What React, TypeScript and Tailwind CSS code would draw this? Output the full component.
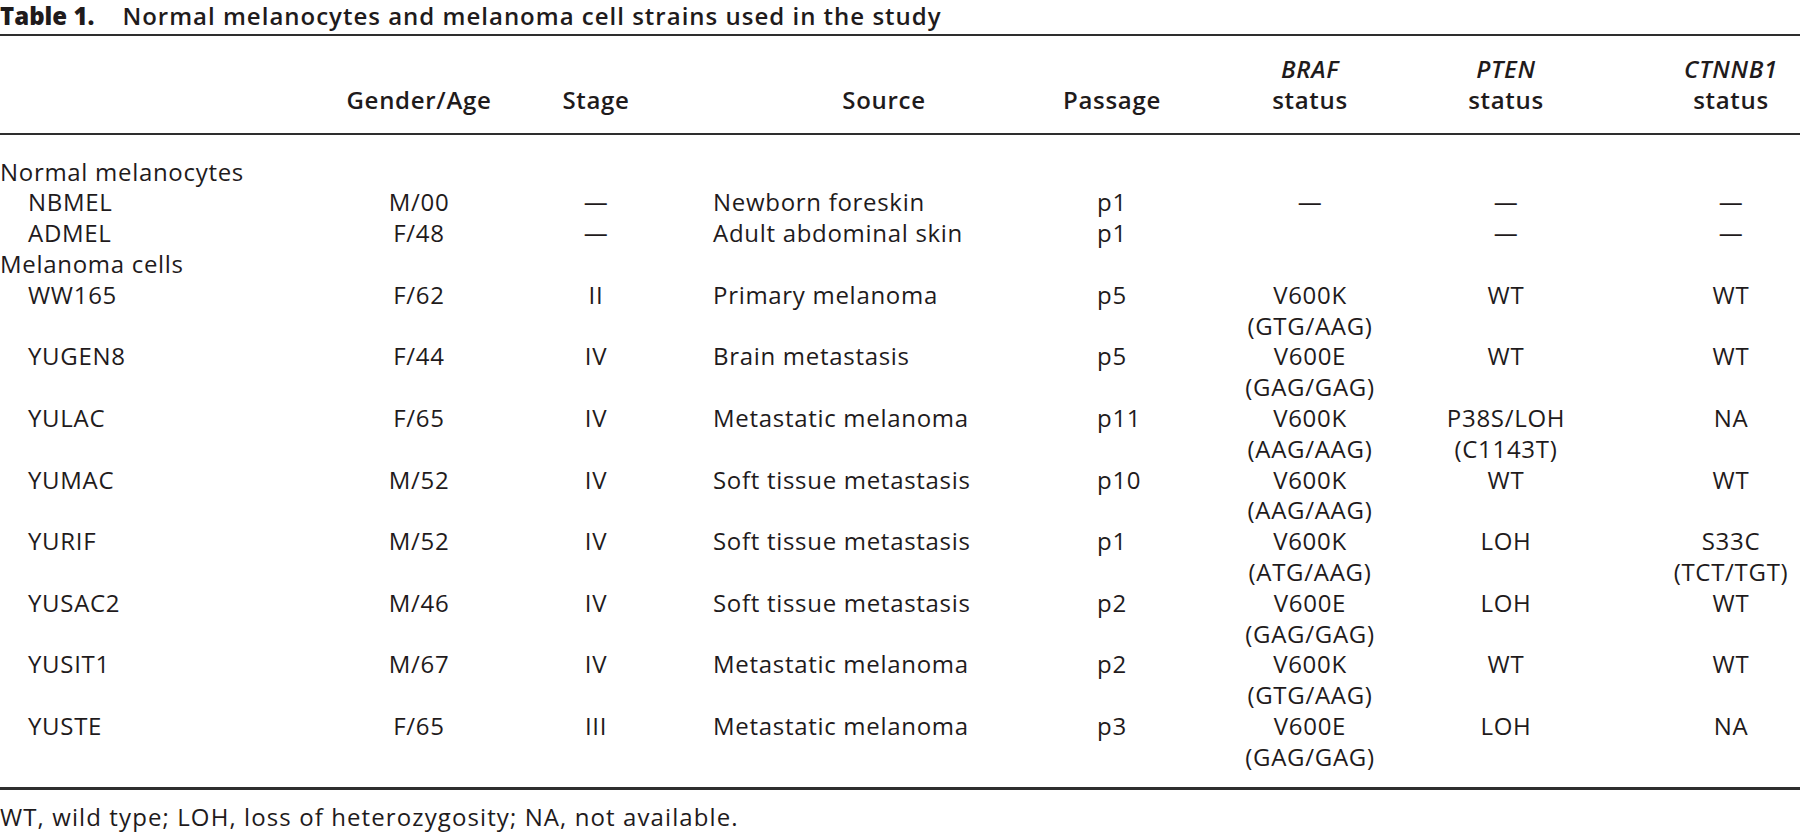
import React from "react";

type Row = {
  name: string;
  ga: string;
  stage: string;
  source: string;
  passage: string;
  braf: string[];
  pten: string[];
  ctnnb1: string[];
};

const normal: Row[] = [
  { name: "NBMEL", ga: "M/00", stage: "—", source: "Newborn foreskin", passage: "p1", braf: ["—"], pten: ["—"], ctnnb1: ["—"] },
  { name: "ADMEL", ga: "F/48", stage: "—", source: "Adult abdominal skin", passage: "p1", braf: [""], pten: ["—"], ctnnb1: ["—"] },
];

const melanoma: Row[] = [
  { name: "WW165", ga: "F/62", stage: "II", source: "Primary melanoma", passage: "p5", braf: ["V600K", "(GTG/AAG)"], pten: ["WT"], ctnnb1: ["WT"] },
  { name: "YUGEN8", ga: "F/44", stage: "IV", source: "Brain metastasis", passage: "p5", braf: ["V600E", "(GAG/GAG)"], pten: ["WT"], ctnnb1: ["WT"] },
  { name: "YULAC", ga: "F/65", stage: "IV", source: "Metastatic melanoma", passage: "p11", braf: ["V600K", "(AAG/AAG)"], pten: ["P38S/LOH", "(C1143T)"], ctnnb1: ["NA"] },
  { name: "YUMAC", ga: "M/52", stage: "IV", source: "Soft tissue metastasis", passage: "p10", braf: ["V600K", "(AAG/AAG)"], pten: ["WT"], ctnnb1: ["WT"] },
  { name: "YURIF", ga: "M/52", stage: "IV", source: "Soft tissue metastasis", passage: "p1", braf: ["V600K", "(ATG/AAG)"], pten: ["LOH"], ctnnb1: ["S33C", "(TCT/TGT)"] },
  { name: "YUSAC2", ga: "M/46", stage: "IV", source: "Soft tissue metastasis", passage: "p2", braf: ["V600E", "(GAG/GAG)"], pten: ["LOH"], ctnnb1: ["WT"] },
  { name: "YUSIT1", ga: "M/67", stage: "IV", source: "Metastatic melanoma", passage: "p2", braf: ["V600K", "(GTG/AAG)"], pten: ["WT"], ctnnb1: ["WT"] },
  { name: "YUSTE", ga: "F/65", stage: "III", source: "Metastatic melanoma", passage: "p3", braf: ["V600E", "(GAG/GAG)"], pten: ["LOH"], ctnnb1: ["NA"] },
];

const grid = "grid grid-cols-[330px_178px_176px_366px_124px_272px_120px_234px]";

function Lines({ lines }: { lines: string[] }) {
  return (
    <>
      {lines.map((l, i) => (
        <div key={i} className="whitespace-nowrap">
          {l === "" ? "\u00a0" : l}
        </div>
      ))}
    </>
  );
}

function DataRow({ r }: { r: Row }) {
  return (
    <div className={grid}>
      <div className="pl-[28px] whitespace-nowrap">{r.name}</div>
      <div className="text-center">{r.ga}</div>
      <div className="text-center">{r.stage}</div>
      <div className="pl-[29px] whitespace-nowrap">{r.source}</div>
      <div className="pl-[47px]">{r.passage}</div>
      <div className="text-center"><Lines lines={r.braf} /></div>
      <div className="text-center"><Lines lines={r.pten} /></div>
      <div className="pl-[96px] text-center"><Lines lines={r.ctnnb1} /></div>
    </div>
  );
}

export default function App() {
  return (
    <div
      className="w-[1800px] h-[839px] overflow-hidden bg-white text-[#1f1b1c] text-[24px] leading-[30.8px] tracking-[0.7px]"
      style={{ fontFamily: '"Open Sans", "Noto Sans", sans-serif' }}
    >
      <div className="leading-[32px] whitespace-nowrap">
        <span className="font-extrabold tracking-[0px]">Table 1.</span>
        <span className="pl-[28px] font-semibold tracking-[1px]">Normal melanocytes and melanoma cell strains used in the study</span>
      </div>
      <div className="mt-[2px] border-t-2 border-[#2e2e2e]" />
      <div className={`${grid} font-semibold pt-[18px] pb-[17px] border-b-2 border-[#2e2e2e] items-end`}>
        <div />
        <div className="text-center">Gender/Age</div>
        <div className="text-center">Stage</div>
        <div className="pl-[34px] text-center">Source</div>
        <div className="text-center whitespace-nowrap">Passage</div>
        <div className="text-center">
          <div className="italic">BRAF</div>
          <div>status</div>
        </div>
        <div className="text-center">
          <div className="italic">PTEN</div>
          <div>status</div>
        </div>
        <div className="pl-[96px] text-center">
          <div className="italic">CTNNB1</div>
          <div>status</div>
        </div>
      </div>
      <div className="pt-[22px] pb-[14px] border-b-[3px] border-[#2e2e2e]">
        <div>Normal melanocytes</div>
        {normal.map((r) => (
          <DataRow key={r.name} r={r} />
        ))}
        <div>Melanoma cells</div>
        {melanoma.map((r) => (
          <DataRow key={r.name} r={r} />
        ))}
      </div>
      <div className="mt-[12px] whitespace-nowrap tracking-[1.1px]">
        WT, wild type; LOH, loss of heterozygosity; NA, not available.
      </div>
    </div>
  );
}
